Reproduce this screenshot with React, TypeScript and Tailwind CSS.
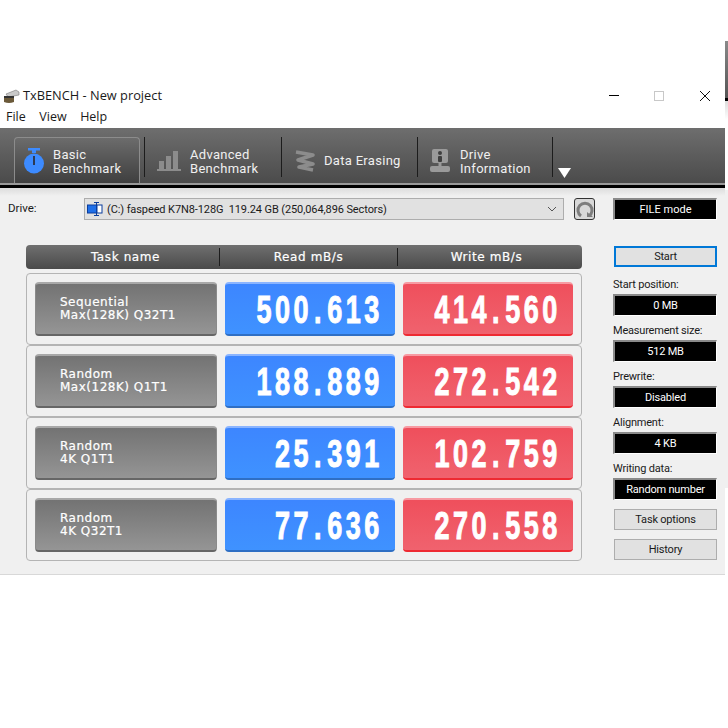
const rows = [
  { line1: "Sequential", line2: "Max(128K) Q32T1", read: "500.613", write: "414.560" },
  { line1: "Random", line2: "Max(128K) Q1T1", read: "188.889", write: "272.542" },
  { line1: "Random", line2: "4K Q1T1", read: "25.391", write: "102.759" },
  { line1: "Random", line2: "4K Q32T1", read: "77.636", write: "270.558" },
];

const settings = [
  { label: "Start position:", value: "0 MB" },
  { label: "Measurement size:", value: "512 MB" },
  { label: "Prewrite:", value: "Disabled" },
  { label: "Alignment:", value: "4 KB" },
  { label: "Writing data:", value: "Random number" },
];

function AppIcon() {
  return (
    <svg width="18" height="16" viewBox="0 0 18 16">
      <path d="M4 6 L14 2 L17 4 L17 7 L6 9 Z" fill="#c9c9c9" stroke="#777" strokeWidth="0.6" />
      <path d="M2 8 H12 V14 Q7 16 2 14 Z" fill="#6b5a3a" />
      <rect x="2" y="8" width="10" height="2" fill="#333" />
    </svg>
  );
}

function StopwatchIcon() {
  return (
    <svg width="20" height="26" viewBox="0 0 20 26">
      <rect x="4" y="0" width="12" height="2.5" fill="#3d8bff" />
      <rect x="8" y="2" width="4" height="3" fill="#3d8bff" />
      <circle cx="10" cy="15.5" r="10" fill="#3d8bff" />
      <rect x="9" y="8" width="2" height="9" fill="#2b3a55" />
    </svg>
  );
}

function BarsIcon() {
  return (
    <svg width="24" height="22" viewBox="0 0 24 22" fill="#8c8c8c">
      <rect x="0" y="19" width="24" height="2" />
      <rect x="2" y="11" width="5" height="8" />
      <rect x="9" y="6" width="5" height="13" />
      <rect x="16" y="1" width="5" height="18" />
    </svg>
  );
}

function SpringIcon() {
  return (
    <svg width="22" height="24" viewBox="0 0 22 24" fill="none" stroke="#8c8c8c" strokeWidth="3.6">
      <path d="M2 3 L19 6 L4 11 L19 15 L5 18 L19 21" strokeLinejoin="round" />
    </svg>
  );
}

function DriveIcon() {
  return (
    <svg width="22" height="24" viewBox="0 0 22 24">
      <rect x="2" y="0" width="16" height="14" rx="2" fill="#9a9a9a" />
      <circle cx="10" cy="4" r="2" fill="#3f3f3f" />
      <rect x="8" y="7" width="4" height="6" rx="1" fill="#3f3f3f" />
      <rect x="8.5" y="13" width="3" height="4" fill="#9a9a9a" />
      <rect x="0" y="17" width="20" height="6" rx="2" fill="#9a9a9a" />
    </svg>
  );
}

function DiskIcon() {
  return (
    <svg width="16" height="14" viewBox="0 0 16 14">
      <rect x="0.5" y="3" width="9" height="8" fill="#1f6fe8" stroke="#0a3d9c" />
      <rect x="10" y="3" width="5" height="8" fill="#fff" stroke="#0a3d9c" />
      <path d="M7 0.5 H12 M9.5 0.5 V13.5 M7 13.5 H12" stroke="#0a3d9c" fill="none" />
    </svg>
  );
}

function RefreshIcon() {
  return (
    <svg width="18" height="17" viewBox="0 0 18 17" fill="none">
      <path d="M5 15 A7 7 0 1 1 13 15" stroke="#7d7d7d" strokeWidth="3" />
      <path d="M11 11 L11 16 L17 16 Z" fill="#7d7d7d" />
    </svg>
  );
}

function Tab({
  icon,
  lines,
  active,
  w,
  textClass,
}: {
  icon: React.ReactNode;
  lines: string[];
  active?: boolean;
  w: string;
  textClass?: string;
}) {
  return (
    <div
      className={`${w} flex h-[46px] shrink-0 items-center rounded-t-[4px] border border-b-0 ${
        active ? "border-[#8c8c8c] bg-gradient-to-b from-[#6c6c6c] to-[#3f3f3f]" : "border-transparent"
      }`}
    >
      <div className="flex w-[38px] shrink-0 justify-center">{icon}</div>
      <div className={`text-[13px] leading-[14px] tracking-[0.3px] text-[#f0f0f0] ${textClass ?? "pt-[2px]"}`}>
        {lines.map((l) => (
          <div key={l}>{l}</div>
        ))}
      </div>
    </div>
  );
}

function Separator() {
  return <div className="mb-[6px] h-[40px] w-px shrink-0 self-end bg-[#1c1c1c]" />;
}

function Metric({ value, tone }: { value: string; tone: "read" | "write" }) {
  const cls =
    tone === "read"
      ? "border-t-[#8ab4ff] border-b-[#2f6fc4] from-[#3d86ff] to-[#3f92ff]"
      : "border-t-[#f79aa2] border-b-[#ee2a32] from-[#ef4f5c] to-[#f0626e]";
  const [whole, frac] = value.split(".");
  return (
    <div
      className={`flex h-[54px] w-[170px] items-center justify-end rounded-[4px] border-t-2 border-b-2 bg-gradient-to-b pt-[2px] pr-[12px] ${cls}`}
    >
      <span className="origin-right scale-x-[0.71] font-['Liberation_Sans',sans-serif] text-[38px] leading-none font-bold tracking-[4.9px] whitespace-nowrap text-white [-webkit-text-stroke:1px_white]">
        {whole}
        <span className="mx-[3px]">.</span>
        {frac}
      </span>
    </div>
  );
}

export default function App() {
  return (
    <div className="relative flex h-[728px] w-[728px] flex-col overflow-hidden bg-white pt-[84px] font-['Roboto',sans-serif] text-[#111]">
      {/* window behind, shows on the right edge */}
      <div className="absolute top-[41px] right-0 h-[57px] w-[3px] bg-gradient-to-b from-[#8a8a8a] to-[#555]" />
      <div className="absolute top-[98px] right-0 h-[3px] w-[3px] bg-black" />
      <div className="absolute top-[101px] right-0 h-[19px] w-[3px] bg-gradient-to-b from-[#dcdcdc] to-white" />
      <div className="absolute top-[190px] right-0 h-[298px] w-[3px] bg-[#f0f0f0]" />

      <div className="flex w-[725px] flex-col">
        {/* title bar */}
        <div className="flex h-[22px] items-center pt-[1px] pl-[2px]">
          <AppIcon />
          <span className="ml-[3px] font-['Open_Sans',sans-serif] text-[12.8px] text-[#1a1a1a]">TxBENCH - New project</span>
          <div className="ml-auto flex items-center pr-[14px]">
            <div className="mr-[35px] h-px w-[10px] bg-black" />
            <div className="mr-[35px] h-[10px] w-[10px] border border-[#c8c8c8]" />
            <svg width="12" height="12" viewBox="0 0 12 12" stroke="#111" fill="none">
              <path d="M1 1 L11 11 M11 1 L1 11" />
            </svg>
          </div>
        </div>

        {/* menu */}
        <div className="flex h-[22px] items-center gap-[13.5px] pt-[1px] pl-[6px] font-['Open_Sans',sans-serif] text-[12.5px] text-[#1a1a1a]">
          <span>File</span>
          <span>View</span>
          <span>Help</span>
        </div>

        {/* toolbar */}
        <div className="flex h-[57px] items-end border-b-2 border-[#999] bg-gradient-to-b from-[#6e6e6e] to-[#4b4b4b] pl-[14px]">
          <Tab w="w-[126px]" active icon={<StopwatchIcon />} lines={["Basic", "Benchmark"]} />
          <div className="w-[4px]" />
          <Separator />
          <div className="w-[4px]" />
          <Tab w="w-[132px]" icon={<BarsIcon />} textClass="pt-[2px] pl-[2px]" lines={["Advanced", "Benchmark"]} />
          <Separator />
          <div className="w-[3px]" />
          <Tab w="w-[132px]" icon={<SpringIcon />} textClass="pt-0" lines={["Data Erasing"]} />
          <Separator />
          <div className="w-[3px]" />
          <Tab w="w-[131px]" icon={<DriveIcon />} lines={["Drive", "Information"]} />
          <Separator />
          <svg className="mb-[5px] ml-[5px]" width="13" height="10" viewBox="0 0 13 10" fill="#fff">
            <path d="M0 0 H13 L6.5 10 Z" />
          </svg>
        </div>
        <div className="h-[3px] bg-black" />

        {/* content */}
        <div className="flex h-[387px] flex-col border-b border-[#d8d8d8] bg-gradient-to-b from-[#dcdcdc] to-[#f0f0f0] to-[8px] pt-[10px]">
          <div className="flex h-[22px] items-center">
            <span className="ml-[8px] w-[76px] text-[11.5px] text-[#1a1a1a]">Drive:</span>
            <div className="flex h-[22px] w-[480px] items-center border border-[#adadad] bg-[#e1e1e1] pl-[2px] text-[11px] tracking-[-0.1px] text-[#1a1a1a]">
              <DiskIcon />
              <span className="ml-[4px] pt-[3px]">(C:) faspeed K7N8-128G&nbsp; 119.24 GB (250,064,896 Sectors)</span>
              <svg className="mr-[6px] ml-auto" width="10" height="6" viewBox="0 0 10 6" fill="none" stroke="#555">
                <path d="M1 1 L5 5 L9 1" />
              </svg>
            </div>
            <div className="ml-[10px] flex h-[22px] w-[21px] items-center justify-center rounded-[3px] border border-[#333] bg-[#d8d8d8]">
              <RefreshIcon />
            </div>
            <div className="ml-[18px] flex h-[22px] w-[104px] items-center justify-center border-t-2 border-r border-b border-l-2 border-t-[#8a8a8a] border-r-white border-b-white border-l-[#8a8a8a] bg-black pt-[2px] text-[11px] text-white">
              FILE mode
            </div>
          </div>

          <div className="flex">
            {/* results table */}
            <div className="mt-[25px] ml-[26px] w-[556px]">
              <div className="flex h-[24px] items-center rounded-[4px] bg-gradient-to-b from-[#707070] to-[#4a4a4a] font-['DejaVu_Sans',sans-serif] text-[12px] tracking-[0.6px] text-white [-webkit-text-stroke:0.2px_white]">
                <div className="w-[193px] pl-[6px] text-center">Task name</div>
                <div className="h-[18px] w-px bg-[#1c1c1c]" />
                <div className="w-[177px] text-center">Read mB/s</div>
                <div className="h-[18px] w-px bg-[#1c1c1c]" />
                <div className="flex-1 pr-[7px] text-center">Write mB/s</div>
              </div>
              <div className="mt-[4px] flex flex-col">
                {rows.map((r) => (
                  <div
                    key={r.read}
                    className="flex h-[72px] items-center gap-[8px] rounded-[4px] border border-[#b4b4b4] pl-[8px]"
                  >
                    <div className="flex h-[54px] w-[182px] flex-col justify-center rounded-[4px] border-t-2 border-r border-b-2 border-l border-t-[#a8a8a8] border-r-[#8a8a8a] border-b-[#666] border-l-[#8a8a8a] bg-gradient-to-b from-[#737373] to-[#959595] pl-[24px] font-['DejaVu_Sans',sans-serif] text-[12px] leading-[13px] tracking-[0.5px] text-white [-webkit-text-stroke:0.2px_white]">
                      <div>{r.line1}</div>
                      <div>{r.line2}</div>
                    </div>
                    <Metric value={r.read} tone="read" />
                    <Metric value={r.write} tone="write" />
                  </div>
                ))}
              </div>
            </div>

            {/* side column */}
            <div className="mt-[26px] ml-[31px] w-[104px] text-[11px] tracking-[-0.2px]">
              <div className="ml-px flex h-[21px] w-[103px] items-center justify-center border-2 border-[#0078d7] bg-[#e1e1e1] pt-[2px] text-[#1a1a1a]">
                Start
              </div>
              <div className="mt-[6px] flex flex-col gap-[3px]">
                {settings.map((s) => (
                  <div key={s.label} className="flex h-[43px] flex-col justify-end">
                    <div className="mb-[2px] leading-[14px] text-[#1a1a1a]">{s.label}</div>
                    <div className="flex h-[22px] items-center justify-center border-t-2 border-r border-b border-l-2 border-t-[#8a8a8a] border-r-white border-b-white border-l-[#8a8a8a] bg-black pt-[1px] text-white">
                      {s.value}
                    </div>
                  </div>
                ))}
              </div>
              <div className="mt-[9px] ml-px flex h-[21px] w-[103px] items-center justify-center border border-[#adadad] bg-[#e1e1e1] pt-[2px] text-[#1a1a1a]">
                Task options
              </div>
              <div className="mt-[9px] ml-px flex h-[21px] w-[103px] items-center justify-center border border-[#adadad] bg-[#e1e1e1] pt-[2px] text-[#1a1a1a]">
                History
              </div>
            </div>
          </div>
        </div>
      </div>
    </div>
  );
}
